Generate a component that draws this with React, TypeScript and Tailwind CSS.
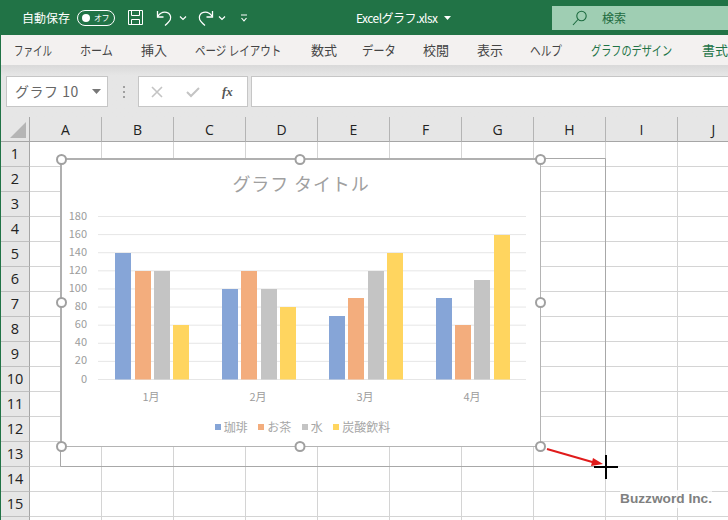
const CJK = "font-['Noto_Sans_CJK_JP','Noto_Sans',sans-serif]";
const columns = ["A", "B", "C", "D", "E", "F", "G", "H", "I", "J"];
const rows = Array.from({ length: 16 }, (_, i) => i + 1);
const menu = [
  { t: "ファイル", w: "w-[38px]", m: "ml-[13px]", c: "text-[#444] scale-x-[0.73]" },
  { t: "ホーム", w: "w-[33px]", m: "ml-[28px]", c: "text-[#444] scale-x-[0.85]" },
  { t: "挿入", w: "w-[26px]", m: "ml-[28px]", c: "text-[#444]" },
  { t: "ページ レイアウト", w: "w-[87px]", m: "ml-[28px]", c: "text-[#444] scale-x-[0.81]" },
  { t: "数式", w: "w-[26px]", m: "ml-[29px]", c: "text-[#444]" },
  { t: "データ", w: "w-[34px]", m: "ml-[25px]", c: "text-[#444] scale-x-[0.87]" },
  { t: "校閲", w: "w-[26px]", m: "ml-[27px]", c: "text-[#444]" },
  { t: "表示", w: "w-[26px]", m: "ml-[28px]", c: "text-[#444]" },
  { t: "ヘルプ", w: "w-[33px]", m: "ml-[27px]", c: "text-[#444] scale-x-[0.82]" },
  { t: "グラフのデザイン", w: "w-[81px]", m: "ml-[28px]", c: "text-[#217346] scale-x-[0.78]" },
  { t: "書式", w: "w-[26px]", m: "ml-[30px]", c: "text-[#217346]" },
];
const colors = ["#86a5d7", "#f3ad7d", "#c4c4c4", "#ffd55f"];
const xs = [
  [115, 135, 154, 173],
  [222, 241, 261, 280],
  [329, 348, 368, 387],
  [436, 455, 474, 494],
];
const data = [
  [140, 120, 120, 60],
  [100, 120, 100, 80],
  [70, 90, 120, 140],
  [90, 60, 110, 160],
];
const ticks = [180, 160, 140, 120, 100, 80, 60, 40, 20, 0];
const months = ["1月", "2月", "3月", "4月"];
const legend = [
  { t: "珈琲", c: "bg-[#86a5d7]" },
  { t: "お茶", c: "bg-[#f3ad7d]" },
  { t: "水", c: "bg-[#c4c4c4]" },
  { t: "炭酸飲料", c: "bg-[#ffd55f]" },
];
const handles = [
  [61.5, 159.5], [300, 159.5], [540.5, 159.5],
  [61.5, 302.5], [540.5, 302.5],
  [61.5, 446.5], [300, 446.5], [540.5, 446.5],
];

function TitleBar() {
  return (
    <div className="h-[35px] bg-[#217346] flex items-center text-white shrink-0">
      <span className={`${CJK} ml-[21px] text-[12px] w-[48px] whitespace-nowrap`}>自動保存</span>
      <div className="ml-[7px] w-[38px] h-[16px] rounded-full border border-white flex items-center justify-between pl-[4px] pr-[5px]">
        <span className="w-[8px] h-[8px] rounded-full bg-white" />
        <span className={`${CJK} text-[8px] leading-none tracking-[-0.5px]`}>オフ</span>
      </div>
      <svg className="ml-[12px]" width="17" height="17" viewBox="0 0 17 17" fill="none" stroke="white" strokeWidth="1">
        <path d="M1.5 1.5h14v14h-14z" />
        <path d="M4.5 1.5v5h8v-5M4.5 15.5v-5h8v5" />
      </svg>
      <svg className="ml-[12px]" width="18" height="18" viewBox="0 0 18 18" fill="none" stroke="white" strokeWidth="1.3">
        <path d="M1.5 2v6h6" />
        <path d="M1.8 7.5C4 4 7.5 2.800 10.500 3.400c3.500 .8 5 4.200 3.800 7.200-1 2.300-3 4-5.300 5.900" />
      </svg>
      <svg className="ml-[5px]" width="8" height="6" viewBox="0 0 8 6" fill="none" stroke="white" strokeWidth="1.2">
        <path d="M1 1.500l3 3 3-3" />
      </svg>
      <svg className="ml-[9px]" width="18" height="18" viewBox="0 0 18 18" fill="none" stroke="white" strokeWidth="1.3">
        <path d="M16.500 2v6h-6" />
        <path d="M16.200 7.500C14 4 10.500 2.800 7.500 3.400c-3.500 .8-5 4.200-3.800 7.200 1 2.300 3 4 5.300 5.900" />
      </svg>
      <svg className="ml-[4px]" width="8" height="6" viewBox="0 0 8 6" fill="none" stroke="white" strokeWidth="1.2">
        <path d="M1 1.500l3 3 3-3" />
      </svg>
      <svg className="ml-[14px]" width="8" height="8" viewBox="0 0 8 8" fill="none" stroke="white" strokeWidth="1.100">
        <path d="M1 1h6M1.500 4l2.500 2.800L6.500 4" />
      </svg>
      <span className={`${CJK} ml-[108px] w-[82px] text-[12px] whitespace-nowrap tracking-[-0.55px]`}>Excelグラフ.xlsx</span>
      <svg className="ml-[6px]" width="7" height="4" viewBox="0 0 7 4" fill="white">
        <path d="M0 0h7L3.500 4z" />
      </svg>
      <div className="ml-[101px] flex-1 h-[24px] bg-[#9fceb3] flex items-center pl-[20px]">
        <svg width="16" height="16" viewBox="0 0 16 16" fill="none" stroke="#1d6b40" strokeWidth="1.100">
          <circle cx="9.500" cy="6" r="4.700" />
          <path d="M6 9.500L1 15" />
        </svg>
        <span className={`${CJK} ml-[14px] text-[12px] text-[#1d6b40]`}>検索</span>
      </div>
    </div>
  );
}

function Ribbon() {
  return (
    <div className={`${CJK} h-[30px] bg-[#f3f1f0] flex items-center text-[13px] shrink-0 overflow-hidden`}>
      {menu.map((m) => (
        <span key={m.t} className={`${m.w} ${m.m} shrink-0`}>
          <span className={`${m.c} inline-block origin-left whitespace-nowrap`}>{m.t}</span>
        </span>
      ))}
    </div>
  );
}

function FormulaBar() {
  return (
    <div className="h-[52px] shrink-0 bg-gradient-to-b from-[#d9d9d9] via-[#e6e6e6] via-[20%] to-[#e6e6e6] pt-[11px] pb-[10px] flex">
      <div className={`${CJK} ml-[5px] w-[102px] h-[31px] bg-white border border-[#c6c6c6] flex items-center justify-between pl-[8px] pr-[6px] text-[#666] text-[14px]`}>
        <span className="whitespace-nowrap tracking-[0.5px]">グラフ 10</span>
        <svg width="9" height="5" viewBox="0 0 9 5" fill="#777">
          <path d="M0 0h9L4.500 5z" />
        </svg>
      </div>
      <div className="ml-[13px] w-[5px] flex flex-col justify-center items-center gap-[3px]">
        <span className="w-[2px] h-[2px] bg-[#a0a0a0]" />
        <span className="w-[2px] h-[2px] bg-[#a0a0a0]" />
        <span className="w-[2px] h-[2px] bg-[#a0a0a0]" />
      </div>
      <div className="ml-[12px] w-[110px] h-[31px] bg-white border border-[#c6c6c6] flex items-center pl-[12px]">
        <svg width="12" height="12" viewBox="0 0 12 12" fill="none" stroke="#c4c4c4" strokeWidth="1.600">
          <path d="M1 1l10 10M11 1L1 11" />
        </svg>
        <svg className="ml-[23px]" width="14" height="12" viewBox="0 0 14 12" fill="none" stroke="#c4c4c4" strokeWidth="2">
          <path d="M1 6l4 4 8-8" />
        </svg>
        <span className="ml-[22px] text-[#555] text-[13px] italic font-bold font-['Liberation_Serif',serif] leading-none">fx</span>
      </div>
      <div className="ml-[3px] flex-1 h-[31px] bg-white border border-[#c6c6c6] border-r-0" />
    </div>
  );
}

function Sheet() {
  return (
    <div className="grid grid-cols-[29px_repeat(10,72px)] auto-rows-[25px] font-['Open_Sans',sans-serif] text-[#222]">
      <div className="bg-[#e6e6e6] border-r border-b border-[#a6a6a6] flex items-end justify-end pr-[3px] pb-[3px]">
        <svg width="16" height="16" viewBox="0 0 16 16" fill="#b5b5b5">
          <path d="M16 0v16H0z" />
        </svg>
      </div>
      {columns.map((c) => (
        <div key={c} className="bg-[#e6e6e6] border-r border-b border-r-[#b4b4b4] border-b-[#a6a6a6] flex items-center justify-center text-[14px]">
          {c}
        </div>
      ))}
      {rows.map((r) => (
        <div key={r} className="contents">
          <div className="bg-[#e6e6e6] border-r border-b border-r-[#a6a6a6] border-b-[#c0c0c0] flex items-center justify-center text-[14.500px]">
            {r < 16 ? r : null}
          </div>
          {columns.map((c) => (
            <div key={c} className="bg-white border-r border-b border-[#d4d4d4]" />
          ))}
        </div>
      ))}
    </div>
  );
}

function Chart() {
  return (
    <div className={`${CJK} absolute left-[61px] top-[159px] w-[480px] h-[287px] bg-white flex flex-col items-center`}>
      <div className="h-[48px] flex items-center text-[18px] text-[#a0a0a0] tracking-[0.900px] whitespace-nowrap">グラフ タイトル</div>
      <svg width="480" height="202" viewBox="61 207 480 202" className="shrink-0">
        {ticks.map((t) => {
          const y = 379.500 - (t / 180) * 163;
          return (
            <g key={t}>
              <line x1="98" x2="526" y1={y} y2={y} stroke="#e6e6e6" strokeWidth="1" />
              <text x="87" y={y + 3} textAnchor="end" fontSize="11" fill="#9c9c9c">
                {t}
              </text>
            </g>
          );
        })}
        {data.map((g, i) =>
          g.map((v, j) => {
            const top = Math.floor(380 - (v / 180) * 163);
            return <rect key={j} x={xs[i][j]} y={top} width="16" height={379.500 - top} fill={colors[j]} />;
          }),
        )}
        {months.map((m, i) => (
          <text key={m} x={151 + i * 107} y="401" textAnchor="middle" fontSize="11" fill="#9c9c9c">
            {m}
          </text>
        ))}
      </svg>
      <div className="mt-[12px] ml-[3px] flex items-center gap-[10.500px] text-[12px] text-[#a6a6a6] leading-none">
        {legend.map((l) => (
          <div key={l.t} className="flex items-center gap-[3px]">
            <span className={`w-[6px] h-[6px] ${l.c}`} />
            <span>{l.t}</span>
          </div>
        ))}
      </div>
    </div>
  );
}

function Overlay() {
  return (
    <svg className="absolute inset-0" width="728" height="520" viewBox="0 0 728 520" fill="none">
      <path d="M60.500 158.500H605.500V466.500H60.500V446" stroke="#a8a8a8" strokeWidth="1" />
      <path d="M541 159H61" stroke="#b0b0b0" strokeWidth="2" />
      <path d="M61 159V446" stroke="#b0b0b0" strokeWidth="2" />
      <path d="M540.500 159V446M61 446.500H541" stroke="#b4b4b4" strokeWidth="1" />
      {handles.map(([x, y]) => (
        <circle key={`${x}-${y}`} cx={x} cy={y} r="4.500" fill="white" stroke="#a0a0a0" strokeWidth="2" />
      ))}
      <path d="M547 449L594 462.500" stroke="#e01b1b" strokeWidth="2" />
      <path d="M603 464L593 458 591 466z" fill="#e01b1b" />
      <path d="M594 467H618M606 455V479" stroke="#000" strokeWidth="2" />
    </svg>
  );
}

export default function App() {
  return (
    <div className="relative w-[728px] h-[520px] overflow-hidden bg-white flex flex-col border-l border-[#217346]">
      <TitleBar />
      <Ribbon />
      <FormulaBar />
      <Sheet />
      <div className="absolute -left-px top-0 w-[728px] h-[520px]">
        <Chart />
        <Overlay />
        <span className="absolute left-[620px] top-[490px] text-[13.700px] leading-[18px] font-bold text-[#808080] bg-white/70 font-['Liberation_Sans',sans-serif] whitespace-nowrap">
          Buzzword Inc.
        </span>
      </div>
    </div>
  );
}
